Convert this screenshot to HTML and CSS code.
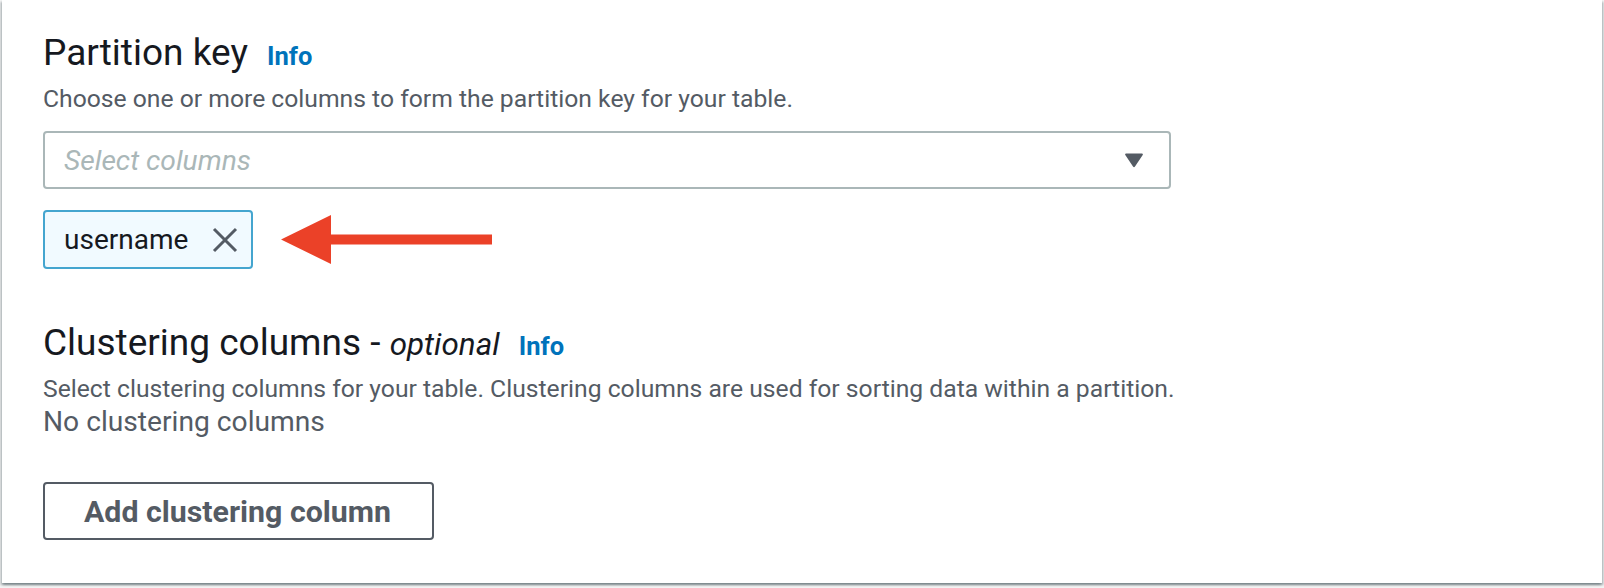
FILE: index.html
```html
<!DOCTYPE html>
<html lang="en">
<head>
  <meta charset="UTF-8">
  <title>Create table - columns</title>
  <link rel="stylesheet" href="styles.css">
</head>
<body>
<div class="card">

  <div class="field">
    <h2 class="field-title">Partition key <a href="#" class="info">Info</a></h2>
    <p class="field-desc">Choose one or more columns to form the partition key for your table.</p>

    <div class="select">
      <span class="placeholder">Select columns</span>
      <svg class="caret" width="20" height="16" viewBox="0 0 20 16">
        <path d="M2 1.5 L18 1.5 Q19.5 1.5 18.7 3 L11 14.5 Q10 16 9 14.5 L1.3 3 Q0.5 1.5 2 1.5 Z" fill="#545b64"/>
      </svg>
    </div>

    <div class="token-row">
      <div class="token">
        <span class="token-label">username</span>
        <button class="token-remove" title="Remove">
          <svg width="26" height="26" viewBox="0 0 26 26">
            <path d="M2 2 L24 24 M24 2 L2 24" stroke="#545b64" stroke-width="3" fill="none"/>
          </svg>
        </button>
      </div>
      <svg class="arrow" width="212" height="50" viewBox="0 0 212 50">
        <path d="M0 24.5 L50 0 L50 19.5 L211 19.5 L211 29.5 L50 29.5 L50 49 Z" fill="#eb4128"/>
      </svg>
    </div>
  </div>

  <div class="field field-clustering">
    <h2 class="field-title">Clustering columns - <i class="optional">optional</i> <a href="#" class="info">Info</a></h2>
    <p class="field-desc">Select clustering columns for your table. Clustering columns are used for sorting data within a partition.</p>
    <p class="empty">No clustering columns</p>
    <button class="btn-add">Add clustering column</button>
  </div>

</div>
</body>
</html>
```

FILE: styles.css
```css
body {
  margin: 0;
  background-color: #f2f3f3;
  font-family: Roboto, "Open Sans", sans-serif;
  height: 588px;
  overflow: hidden;
}

.card {
  margin: 0 2px;
  background-color: #fff;
  padding: 31px 41px 43px;
  box-shadow: 0 2px 2px rgba(0, 28, 36, 0.3), 2px 2px 2px rgba(0, 28, 36, 0.15), -2px 2px 2px rgba(0, 28, 36, 0.15);
}

.field-title {
  margin: 0;
  font-size: 37px;
  line-height: 44px;
  font-weight: 400;
  color: #16191f;
}

.info {
  margin-left: 10px;
  font-size: 25.5px;
  font-weight: 700;
  color: #0073bb;
  text-decoration: none;
}

.optional {
  font-size: 31.4px;
}

.field-desc {
  margin: 6px 0 0;
  font-size: 24.7px;
  line-height: 30px;
  color: #545b64;
}

.select {
  margin-top: 17px;
  width: 1128px;
  height: 58px;
  box-sizing: border-box;
  border: 2px solid #aab7b8;
  border-radius: 4px;
  padding: 0 25px 0 19px;
  display: flex;
  align-items: center;
  justify-content: space-between;
}

.placeholder {
  font-size: 28.2px;
  font-style: italic;
  color: #aab7b8;
}

.token-row {
  margin-top: 21px;
  display: flex;
  align-items: center;
  gap: 28px;
}

.token {
  height: 59px;
  box-sizing: border-box;
  border: 2px solid #44a5cf;
  border-radius: 4px;
  background-color: #f1faff;
  padding: 0 13px 0 19px;
  display: flex;
  align-items: center;
  gap: 24px;
}

.token-label {
  font-size: 28px;
  color: #16191f;
}

.token-remove {
  border: none;
  background: none;
  padding: 0;
  display: flex;
  cursor: pointer;
}

.field-clustering {
  margin-top: 52px;
}

.empty {
  margin: 1px 0 0;
  font-size: 28.2px;
  line-height: 34px;
  color: #545b64;
}

.btn-add {
  margin-top: 43px;
  height: 58px;
  box-sizing: border-box;
  border: 2px solid #545b64;
  border-radius: 4px;
  background-color: #fff;
  padding: 0 41px 0 39px;
  font-family: Roboto, "Open Sans", sans-serif;
  font-size: 30.3px;
  font-weight: 700;
  color: #545b64;
  cursor: pointer;
}
```
